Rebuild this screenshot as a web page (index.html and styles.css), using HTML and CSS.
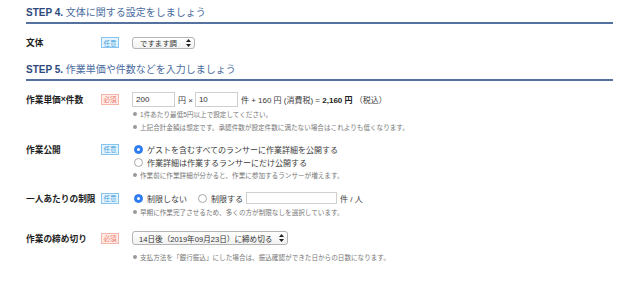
FILE: index.html
```html
<!DOCTYPE html>
<html lang="ja">
<head>
<meta charset="utf-8">
<link rel="stylesheet" href="styles.css">
</head>
<body>
<div class="page">
  <h2 class="step step-first"><b>STEP 4.</b> 文体に関する設定をしましょう</h2>
  <div class="field field-style">
    <div class="label">文体</div>
    <div class="badge-col"><span class="badge optional">任意</span></div>
    <div class="content">
      <div class="line"><span class="select select-style">ですます調<svg class="arrows" width="5" height="8" viewBox="0 0 5 8"><path d="M2.5 0L5 3H0Z M2.5 8L0 5H5Z" fill="#222"/></svg></span></div>
    </div>
  </div>

  <h2 class="step step-second"><b>STEP 5.</b> 作業単価や件数などを入力しましょう</h2>
  <div class="field field-price">
    <div class="label">作業単価<span class="x">×</span>件数</div>
    <div class="badge-col"><span class="badge required">必須</span></div>
    <div class="content">
      <div class="line">
        <span class="input input-num">200</span>
        <span class="unit">円 <span class="x">×</span></span>
        <span class="input input-num">10</span>
        <span class="unit">件 + 160 円 (消費税) = <b>2,160 円</b>&nbsp;（税込）</span>
      </div>
      <p class="note note-first"><i class="dot"></i>1件あたり最低5円以上で設定してください。</p>
      <p class="note"><i class="dot"></i>上記合計金額は想定です。承認件数が設定件数に満たない場合はこれよりも低くなります。</p>
    </div>
  </div>

  <div class="field field-public">
    <div class="label">作業公開</div>
    <div class="badge-col"><span class="badge optional">任意</span></div>
    <div class="content">
      <div class="line"><span class="radio checked"></span>ゲストを含むすべてのランサーに作業詳細を公開する</div>
      <div class="line"><span class="radio"></span>作業詳細は作業するランサーにだけ公開する</div>
      <p class="note"><i class="dot"></i>作業前に作業詳細が分かると、作業に参加するランサーが増えます。</p>
    </div>
  </div>

  <div class="field field-limit">
    <div class="label">一人あたりの制限</div>
    <div class="badge-col"><span class="badge optional">任意</span></div>
    <div class="content">
      <div class="line">
        <span class="radio checked"></span>制限しない
        <span class="radio radio-gap"></span>制限する
        <span class="input input-wide"></span>
        <span class="unit">件 / 人</span>
      </div>
      <p class="note"><i class="dot"></i>早期に作業完了させるため、多くの方が制限なしを選択しています。</p>
    </div>
  </div>

  <div class="field field-deadline">
    <div class="label">作業の締め切り</div>
    <div class="badge-col"><span class="badge required">必須</span></div>
    <div class="content">
      <div class="line"><span class="select select-deadline">14日後（2019年09月23日）に締め切る<svg class="arrows" width="5" height="8" viewBox="0 0 5 8"><path d="M2.5 0L5 3H0Z M2.5 8L0 5H5Z" fill="#222"/></svg></span></div>
      <p class="note note-deadline"><i class="dot"></i>支払方法を「銀行振込」にした場合は、振込確認ができた日からの日数になります。</p>
    </div>
  </div>
</div>
</body>
</html>
```

FILE: styles.css
```css
* { box-sizing: border-box; }
html, body { margin: 0; padding: 0; background: #fff; }
body {
  font-family: "Liberation Sans", "Noto Sans CJK JP", sans-serif;
  color: #333;
  font-size: 8px;
}
.page {
  width: 587px;
  margin-left: 26px;
}
.step {
  margin: 0;
  font-size: 10px;
  font-weight: normal;
  line-height: 14px;
  color: #4a6b9e;
  padding-bottom: 2px;
  border-bottom: 2px solid #55719f;
}
.step b { color: #2d4a7c; font-weight: bold; }
.step-first { margin-top: 6px; }
.step-second { margin-top: 13px; }

.field {
  display: flex;
  align-items: flex-start;
  --lh: 15px;
}
.field-style { margin-top: 11px; }
.field-price { margin-top: 10px; --lh: 16px; }
.field-public { margin-top: 9px; --lh: 13px; }
.field-limit { margin-top: 9px; }
.field-deadline { margin-top: 12px; }

.label {
  width: 75px;
  height: var(--lh);
  display: flex;
  align-items: center;
  font-weight: bold;
  font-size: 8.7px;
  color: #1e1e1e;
  white-space: nowrap;
}
.x { font-family: "Liberation Sans", sans-serif; }
.badge-col {
  width: 31px;
  height: var(--lh);
  display: flex;
  align-items: center;
}
.badge {
  display: inline-flex;
  align-items: center;
  justify-content: center;
  width: 18px;
  height: 11px;
  font-size: 6.6px;
  border: 1px solid;
}
.optional { color: #3d9ddc; background: #e6f4fd; border-color: #86c5ee; }
.required { color: #f07a6c; background: #fdece8; border-color: #f5b6aa; }

.content { flex: 1; }
.line {
  height: var(--lh);
  display: flex;
  align-items: center;
  white-space: nowrap;
  color: #3a3a3a;
}
.select {
  display: inline-flex;
  align-items: center;
  justify-content: space-between;
  height: 12px;
  padding: 0 3px 0 7px;
  border: 1px solid #b4b4b4;
  border-radius: 3px;
  background: linear-gradient(#ffffff, #f1f1f1);
  font-size: 7.4px;
  color: #333;
}
.select-style { width: 63px; }
.select-deadline { width: 156px; height: 14px; padding-left: 6px; font-size: 7.6px; }
.arrows { flex: none; }

.input {
  display: inline-flex;
  align-items: center;
  height: 15px;
  border: 1px solid #cfcfcf;
  padding-left: 3px;
  font-size: 8px;
  color: #333;
  background: #fff;
}
.input-num { width: 43px; }
.input-wide { width: 91px; height: 12px; margin-left: 3px; }
.unit { margin: 0 2px 0 3px; }
.unit b { color: #222; }

.radio {
  flex: none;
  width: 9px;
  height: 9px;
  border-radius: 50%;
  border: 1px solid #a8a8a8;
  background: #fff;
  margin: 0 4px 0 2px;
  position: relative;
}
.radio.checked {
  border-color: #2f7bf0;
  background: #2f7bf0;
}
.radio.checked::after {
  content: "";
  position: absolute;
  left: 2px;
  top: 2px;
  width: 3px;
  height: 3px;
  border-radius: 50%;
  background: #fff;
}
.radio-gap { margin-left: 11px; }

.note {
  margin: 0;
  height: 13px;
  line-height: 13px;
  font-size: 6.6px;
  color: #777;
  white-space: nowrap;
  display: flex;
  align-items: center;
}
.note-first { margin-top: 0.5px; }
.note-deadline { margin-top: 5px; }
.dot {
  display: inline-block;
  width: 4px;
  height: 4px;
  border-radius: 50%;
  background: #9a9a9a;
  margin: 0 3px 0 1px;
}
```
